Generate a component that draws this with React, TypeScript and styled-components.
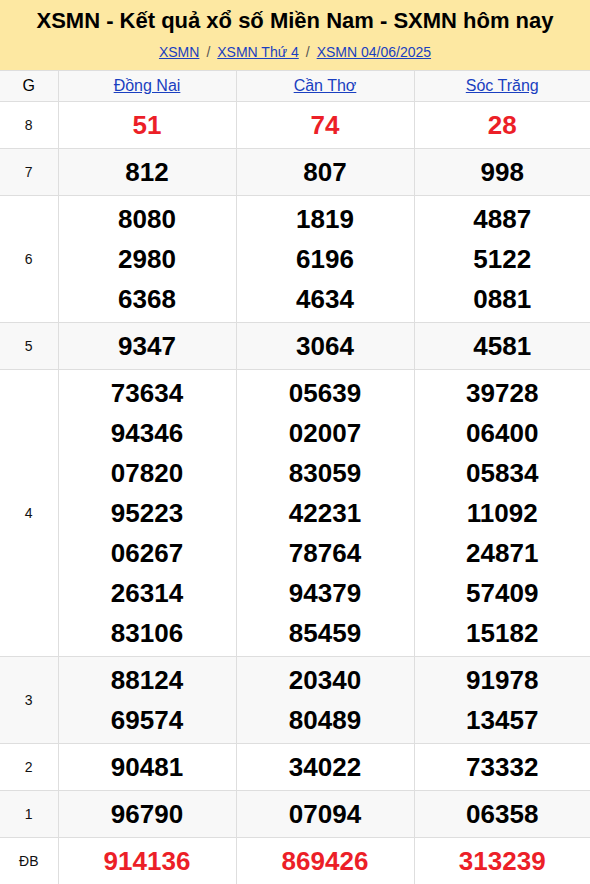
import React from "react";
import styled, { createGlobalStyle } from "styled-components";

const Global = createGlobalStyle`
  html, body { margin: 0; padding: 0; background: #fff; }
  body { font-family: "Liberation Sans", Arial, sans-serif; color: #000; }
`;

const Header = styled.header`
  background: #fde8a2;
  padding: 8px 0 8px;
  text-align: center;
`;

const Title = styled.h1`
  margin: 0;
  font-size: 22px;
  line-height: 26px;
  font-weight: 700;
  color: #000;
`;

const Crumbs = styled.nav`
  margin-top: 8px;
  font-size: 14px;
  line-height: 20px;
  display: flex;
  justify-content: center;
  gap: 7px;
`;

const Crumb = styled.a`
  color: #1a3fc0;
  text-decoration: underline;
`;

const Sep = styled.span`
  color: #555;
`;

const Table = styled.table`
  width: 590px;
  border-collapse: collapse;
  table-layout: fixed;
`;

const Row = styled.tr<{ $alt?: boolean }>`
  background: ${(p) => (p.$alt ? "#f8f8f8" : "#fff")};
`;

const HeadCell = styled.th`
  border: 1px solid #dedede;
  font-weight: 400;
  font-size: 16px;
  line-height: 30px;
  padding: 0;
  text-align: center;
  &:first-child { border-left: none; }
  &:last-child { border-right: none; }
`;

const Province = styled.a`
  color: #1a3fc0;
  text-decoration: underline;
`;

const Label = styled.td`
  border: 1px solid #dedede;
  border-left: none;
  font-size: 14px;
  text-align: center;
  vertical-align: middle;
  color: #111;
  padding: 0;
`;

const Cell = styled.td`
  border: 1px solid #dedede;
  text-align: center;
  padding: 3px 0;
  vertical-align: middle;
  &:last-child { border-right: none; }
`;

const Num = styled.div<{ $red?: boolean }>`
  font-size: 26px;
  line-height: 40px;
  font-weight: 700;
  color: ${(p) => (p.$red ? "#ec1f28" : "#000")};
`;

type Prize = { label: string; red?: boolean; values: string[][] };

const prizes: Prize[] = [
  { label: "8", red: true, values: [["51"], ["74"], ["28"]] },
  { label: "7", values: [["812"], ["807"], ["998"]] },
  {
    label: "6",
    values: [
      ["8080", "2980", "6368"],
      ["1819", "6196", "4634"],
      ["4887", "5122", "0881"],
    ],
  },
  { label: "5", values: [["9347"], ["3064"], ["4581"]] },
  {
    label: "4",
    values: [
      ["73634", "94346", "07820", "95223", "06267", "26314", "83106"],
      ["05639", "02007", "83059", "42231", "78764", "94379", "85459"],
      ["39728", "06400", "05834", "11092", "24871", "57409", "15182"],
    ],
  },
  {
    label: "3",
    values: [
      ["88124", "69574"],
      ["20340", "80489"],
      ["91978", "13457"],
    ],
  },
  { label: "2", values: [["90481"], ["34022"], ["73332"]] },
  { label: "1", values: [["96790"], ["07094"], ["06358"]] },
  { label: "ĐB", red: true, values: [["914136"], ["869426"], ["313239"]] },
];

const provinces = ["Đồng Nai", "Cần Thơ", "Sóc Trăng"];

export default function App() {
  return (
    <>
      <Global />
      <Header>
        <Title>XSMN - Kết quả xổ số Miền Nam - SXMN hôm nay</Title>
        <Crumbs>
          <Crumb href="#">XSMN</Crumb>
          <Sep>/</Sep>
          <Crumb href="#">XSMN Thứ 4</Crumb>
          <Sep>/</Sep>
          <Crumb href="#">XSMN 04/06/2025</Crumb>
        </Crumbs>
      </Header>
      <Table>
        <colgroup>
          <col style={{ width: 58 }} />
          <col style={{ width: 178 }} />
          <col style={{ width: 178 }} />
          <col style={{ width: 176 }} />
        </colgroup>
        <thead>
          <Row $alt>
            <HeadCell>G</HeadCell>
            {provinces.map((p) => (
              <HeadCell key={p}>
                <Province href="#">{p}</Province>
              </HeadCell>
            ))}
          </Row>
        </thead>
        <tbody>
          {prizes.map((pr, i) => (
            <Row key={pr.label} $alt={i % 2 === 1}>
              <Label>{pr.label}</Label>
              {pr.values.map((col, j) => (
                <Cell key={j}>
                  {col.map((v) => (
                    <Num key={v} $red={pr.red}>
                      {v}
                    </Num>
                  ))}
                </Cell>
              ))}
            </Row>
          ))}
        </tbody>
      </Table>
    </>
  );
}
